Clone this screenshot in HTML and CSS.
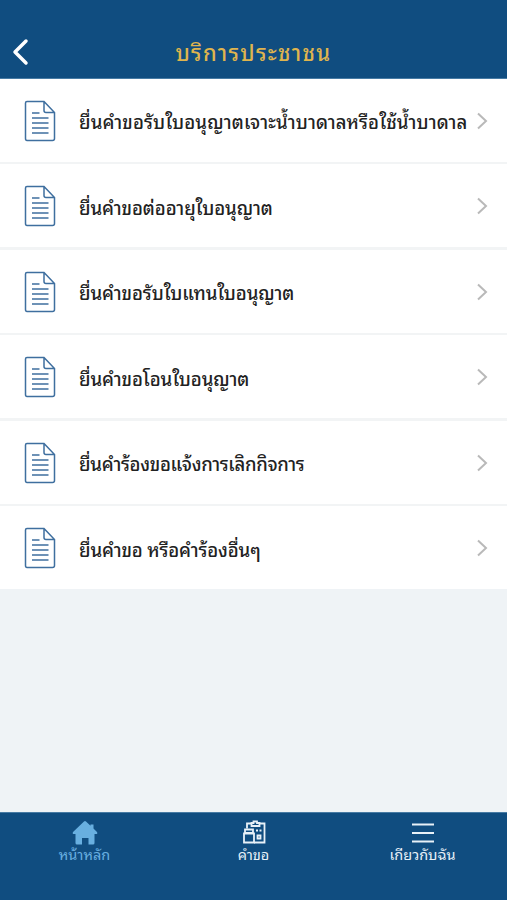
FILE: index.html
```html
<!DOCTYPE html>
<html lang="th">
<head>
    <meta charset="UTF-8">
    <meta name="viewport" content="width=device-width, initial-scale=1.0">
    <title>บริการประชาชน</title>
    <link rel="stylesheet" href="styles.css">
</head>
<body>
    <svg class="symbols">
        <symbol id="doc" viewBox="0 0 32 42">
            <path d="M3 1.500H20L30.500 12.500V38.500Q30.500 40.500 28.500 40.500H3Q1.500 40.500 1.500 38.500V3Q1.500 1.500 3 1.500Z M20 1.500V10.500Q20 12.500 22 12.500H30.500"/>
            <path d="M8 13H15.500M8 18H24.500M8 23H24.500M8 28H24.500M8 33H24.500"/>
        </symbol>
        <symbol id="next" viewBox="0 0 12 18">
            <path d="M2 1.500L10 9L2 16.500"/>
        </symbol>
    </svg>

    <header class="header">
        <a class="back" href="#">
            <svg width="20" height="28" viewBox="0 0 20 28"><path d="M16 3L5 14L16 25"/></svg>
        </a>
        <h1>บริการประชาชน</h1>
    </header>

    <main class="list">
        <a class="row" href="#">
            <svg class="doc"><use href="#doc"/></svg>
            <span class="label label-1">ยื่นคำขอรับใบอนุญาตเจาะน้ำบาดาลหรือใช้น้ำบาดาล</span>
            <svg class="next"><use href="#next"/></svg>
        </a>
        <a class="row" href="#">
            <svg class="doc"><use href="#doc"/></svg>
            <span class="label label-2">ยื่นคำขอต่ออายุใบอนุญาต</span>
            <svg class="next"><use href="#next"/></svg>
        </a>
        <a class="row" href="#">
            <svg class="doc"><use href="#doc"/></svg>
            <span class="label label-3">ยื่นคำขอรับใบแทนใบอนุญาต</span>
            <svg class="next"><use href="#next"/></svg>
        </a>
        <a class="row" href="#">
            <svg class="doc"><use href="#doc"/></svg>
            <span class="label label-4">ยื่นคำขอโอนใบอนุญาต</span>
            <svg class="next"><use href="#next"/></svg>
        </a>
        <a class="row" href="#">
            <svg class="doc"><use href="#doc"/></svg>
            <span class="label label-5">ยื่นคำร้องขอแจ้งการเลิกกิจการ</span>
            <svg class="next"><use href="#next"/></svg>
        </a>
        <a class="row" href="#">
            <svg class="doc"><use href="#doc"/></svg>
            <span class="label label-6">ยื่นคำขอ หรือคำร้องอื่นๆ</span>
            <svg class="next"><use href="#next"/></svg>
        </a>
    </main>

    <nav class="tabs">
        <a class="tab active" href="#">
            <svg width="26" height="26" viewBox="0 0 26 26"><path fill="currentColor" d="M12 1.500Q13 .6 14 1.500L18.500 5.700V4.500H21.500V8.500L25 12Q26 14 24 14H22.500V23Q22.500 24.500 21 24.500H16.500V18H10V24.500H5Q3.500 24.500 3.500 23V14H2Q0 14 1 12Z"/></svg>
            <span>หน้าหลัก</span>
        </a>
        <a class="tab" href="#">
            <svg width="26" height="26" viewBox="0 0 26 26" fill="none" stroke="currentColor" stroke-width="1.800">
                <path d="M6 8.500V3.500H10.500M18 3.500H23.500V22.500H13M10.500 6V3H12.500V1.500H16V3H18.500V6Z"/>
                <path d="M4 9.500H12V13H4ZM3 13.500H13V22.500H3Z"/>
                <path d="M16.500 15.500H19.500V18.500H16.500ZM15 10.500H17M18.500 10.500H20.500"/>
            </svg>
            <span>คำขอ</span>
        </a>
        <a class="tab" href="#">
            <svg width="26" height="26" viewBox="0 0 26 26"><path stroke="currentColor" stroke-width="2.200" d="M2 4.500H24M2 13H24M2 21.500H24"/></svg>
            <span>เกียวกับฉัน</span>
        </a>
    </nav>
</body>
</html>
```
FILE: styles.css
```css
* {
    box-sizing: border-box;
}
body {
    margin: 0;
    height: 900px;
    display: flex;
    flex-direction: column;
    background-color: #eff3f6;
    font-family: "Noto Sans Thai Looped", "Noto Sans Thai", "Noto Sans", sans-serif;
    overflow: hidden;
}
a {
    color: inherit;
    text-decoration: none;
}
.symbols {
    display: none;
}
.header {
    height: 79px;
    padding: 26px 10px 0;
    display: grid;
    grid-template-columns: 20px 1fr 20px;
    align-items: center;
    background-color: #104d80;
    border-bottom: 1px solid #477ba4;
}
.back svg {
    display: block;
    fill: none;
    stroke: #fff;
    stroke-width: 3.5;
    stroke-linecap: round;
    stroke-linejoin: round;
}
.header h1 {
    margin: 0;
    padding-bottom: 2px;
    color: #dfb44e;
    font-size: 22px;
    font-weight: 500;
    line-height: 32px;
    letter-spacing: 1.3px;
    text-align: center;
    white-space: nowrap;
}
.list {
    display: flex;
    flex-direction: column;
    gap: 2.6px;
    background-color: #f2f4f5;
}
.row {
    height: 82.9px;
    padding: 1px 19px 0 24px;
    display: flex;
    align-items: center;
    background-color: #fff;
}
.doc {
    width: 32px;
    height: 42px;
    flex: none;
    margin-right: 23px;
    fill: none;
    stroke: #3f6f9f;
    stroke-width: 1.5;
}
.label {
    flex: 1;
    padding-top: 1px;
    color: #222;
    font-size: 18.5px;
    font-weight: 500;
    line-height: 30px;
    letter-spacing: -0.1px;
    white-space: nowrap;
}
.label-1 {
    letter-spacing: 0.13px;
}
.label-5 {
    letter-spacing: -0.3px;
}
.label-6 {
    letter-spacing: -0.15px;
}
.next {
    width: 12px;
    height: 18px;
    flex: none;
    fill: none;
    stroke: #b9b9b9;
    stroke-width: 2;
}
.tabs {
    height: 88px;
    margin-top: auto;
    padding-top: 7px;
    display: grid;
    grid-template-columns: repeat(3, 1fr);
    background-color: #104d80;
    border-top: 1px solid #477ba4;
}
.tab {
    display: flex;
    flex-direction: column;
    align-items: center;
    color: #e8f1f8;
    font-size: 14.5px;
    line-height: 16px;
}
.tab.active {
    color: #68afe0;
}
```
